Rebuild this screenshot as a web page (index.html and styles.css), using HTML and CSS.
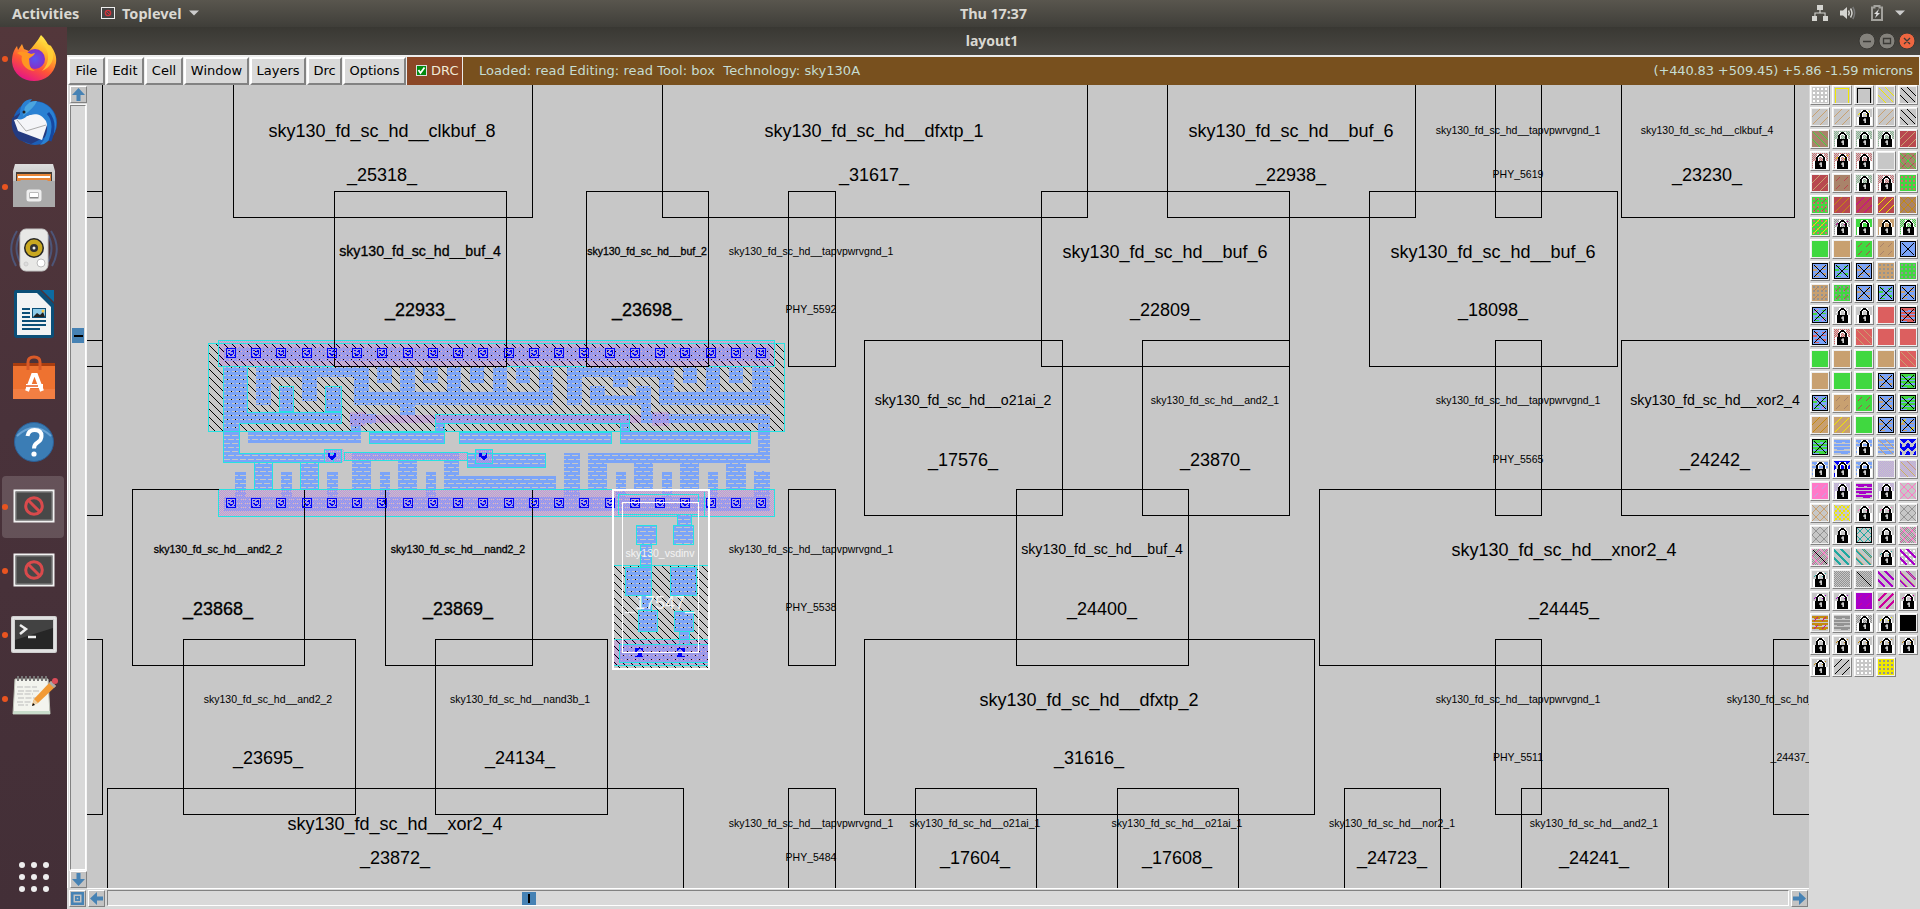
FILE: index.html
```html
<!DOCTYPE html>
<html lang="en">
<head>
<meta charset="utf-8">
<title>layout1</title>
<link rel="stylesheet" href="styles.css">
</head>
<body>
<header class="topbar">
  <div class="top-left">
    <span class="activities">Activities</span>
    <svg class="app-mini" width="14" height="12" viewBox="0 0 14 12"><rect x=".5" y=".5" width="13" height="11" fill="#444" stroke="#eee"/><circle cx="7" cy="6" r="2.6" fill="none" stroke="#d0343c" stroke-width="1.4"/><path d="M5 4l4 4" stroke="#d0343c"/></svg>
    <span class="toplevel">Toplevel</span>
    <svg width="10" height="6" viewBox="0 0 10 6"><path d="M0 .5h10L5 5.5z" fill="#ccc"/></svg>
  </div>
  <div class="clock">Thu 17:37</div>
  <div class="tray">
    <svg width="16" height="16" viewBox="0 0 16 16" fill="#d4d4d0"><path d="M5 0h6v5H8.6v2.500h5V11H16v5h-5v-5h1.500V8.600h-9V11H5v5H0v-5h2.400V7.500h5V5H5z"/></svg>
    <svg width="16" height="14" viewBox="0 0 16 14"><path d="M0 4.500h3L7 1v12L3 9.500H0z" fill="#d4d4d0"/><path d="M8.500 4.500q1.500 2.500 0 5M10.500 2.500q3 4.500 0 9" fill="none" stroke="#d4d4d0" stroke-width="1.500"/><path d="M12.800 1q3.600 6 0 12" fill="none" stroke="#777" stroke-width="1.500"/></svg>
    <svg width="12" height="16" viewBox="0 0 12 16"><path d="M1 2.500h2.500V1h5v1.500H11V15H1z" fill="none" stroke="#a3a29d" stroke-width="2"/><path d="M8 4L3 9h2.500L4 13l5-5H6.500z" fill="#ddd"/></svg>
    <svg width="10" height="6" viewBox="0 0 10 6"><path d="M0 .5h10L5 5.500z" fill="#ccc"/></svg>
  </div>
</header>
<div class="desktop">
  <nav class="dock">
    <div class="slot run"><svg viewBox="0 0 48 48"><defs><linearGradient id="fx" x1=".8" y1="0" x2=".3" y2="1"><stop offset="0" stop-color="#fff44f"/><stop offset=".35" stop-color="#ffb02a"/><stop offset=".65" stop-color="#ff5634"/><stop offset="1" stop-color="#e3128a"/></linearGradient><radialGradient id="fp"><stop offset="0" stop-color="#5a55f2"/><stop offset="1" stop-color="#8430c8"/></radialGradient></defs><path d="M31 1c4 4 6 7 7 10 2 0 3 1 3 1 4 6 6 11 5 17C44 40 35 47 24 47S3 40 2 28c0-8 2-12 5-16l1 4 4-6 2 5 5 2c4-5 8-9 12-16z" fill="url(#fx)"/><circle cx="25" cy="25" r="10" fill="url(#fp)"/><path d="M7 19c5-3 9-1 14 1l4-1c-1 3-5 4-6 6 1 4-1 8 6 12-10 0-15-9-13-15z" fill="#ff9622"/><path d="M30 8c10 7 11 20 2 29 12-5 15-18 6-27z" fill="#ffd236" opacity=".8"/></svg></div>
    <div class="slot"><svg viewBox="0 0 48 48"><circle cx="25" cy="25" r="22" fill="#1c5fb8"/><path d="M2 20q-2 14 7 22l12 4 14-7 8-15-8-9-20-3z" fill="#243b80"/><path d="M4 22l28-9 8 5-8 24-24-9z" fill="#f4f5f8"/><path d="M7 22l9 11 20-6" fill="none" stroke="#aaa"/><path d="M10 16Q10 2 22 1l-2 3c14-3 25 7 26 19 1 11-5 19-12 23l-4 1c6-6 9-17 6-24-5-8-12-8-19-5-3 3-6 4-10 3z" fill="#2a81d3"/><path d="M15 9q5-7 12-6-3 7-14 15z" fill="#4ba5df"/><path d="M38 15q9 10 2 28" fill="none" stroke="#1547a0" stroke-width="3"/><circle cx="14" cy="14" r="1.500" fill="#222"/></svg></div>
    <div class="slot run"><svg viewBox="0 0 48 48"><defs><linearGradient id="gr" x1="0" y1="0" x2="0" y2="1"><stop offset="0" stop-color="#ddd"/><stop offset="1" stop-color="#999"/></linearGradient></defs><path d="M5 2h38l2 7v36H3V9z" fill="url(#gr)"/><path d="M6 10h36v10H6z" fill="#443c36"/><path d="M7 12h34v8H7z" fill="#e98739"/><path d="M8 15h32" stroke="#fff" stroke-width="2"/><path d="M3 19h7l1-1h26l1 1h7v26H3z" fill="#aaa"/><rect x="18" y="29" width="12" height="9" rx="1" fill="#888" stroke="#eee" stroke-width="3"/><rect x="20" y="31" width="8" height="4" fill="#fff"/></svg></div>
    <div class="slot"><svg viewBox="0 0 48 48"><path d="M7 5Q-4 22 6 40M41 5q11 17 1 35M10 9Q3 22 10 36M38 9q7 13 0 27" fill="none" stroke="#4d5578" stroke-width="2"/><rect x="10" y="3" width="28" height="42" rx="6" fill="#e8e8e6"/><rect x="10" y="3" width="28" height="42" rx="6" fill="none" stroke="#c4c4c4"/><circle cx="24" cy="22" r="10" fill="#252525"/><circle cx="24" cy="22" r="8.500" fill="#c9a820"/><circle cx="24" cy="22" r="4" fill="#333"/><circle cx="24" cy="22" r="1.500" fill="#eee"/><circle cx="31" cy="37" r="4" fill="#fff" stroke="#bbb"/><circle cx="16" cy="38" r="2" fill="#ddd" stroke="#ccc"/></svg></div>
    <div class="slot"><svg viewBox="0 0 48 48"><path d="M6 0h24l14 14v31q0 3-3 3H7q-3 0-3-3V3q0-3 2-3z" fill="#0b4f78"/><path d="M7 3h20l14 14v28H7z" fill="#f1f3f4"/><path d="M32 0h12v12z" fill="#0d6ba1"/><path d="M12 19h8M12 23h8M12 27h8M12 31h24M12 35h24M12 39h18" stroke="#0b4f78" stroke-width="2"/><rect x="22.500" y="18.500" width="13" height="9" fill="#8ecbe9" stroke="#0b4f78"/><path d="M23 27l4-4 3 2 3-3 2 5z" fill="#222"/><circle cx="33" cy="21" r="1.500" fill="#f5c84b"/></svg></div>
    <div class="slot"><svg viewBox="0 0 48 48"><path d="M3 9h42v12H3z" fill="#a83d10"/><path d="M3 12h42v33H3z" fill="#ee7230"/><path d="M3 35h42v10H3z" fill="#f37f43"/><path d="M18 16V8q0-5 6-5t6 5v8" fill="none" stroke="#d95a28" stroke-width="3"/><path d="M17 37l6-16h3l6 16M16 32h17" fill="none" stroke="#fff" stroke-width="4"/><path d="M16 32h12" stroke="#e85d20" stroke-width="1.500"/></svg></div>
    <div class="slot"><svg viewBox="0 0 48 48"><circle cx="24" cy="24" r="19.500" fill="#3b7db5" stroke="#2c5f96"/><path d="M7 18Q24 2 41 18" stroke="#6ba3d3" stroke-width="2" fill="none"/><path d="M17.500 18q1-6 7-6 7 0 7 6 0 4-4 6.500-3.500 2-3.500 6" fill="none" stroke="#fff" stroke-width="4"/><circle cx="24" cy="36" r="2.600" fill="#fff"/></svg></div>
    <div class="slot run active"><svg viewBox="0 0 48 48"><rect x="4.500" y="8.500" width="39" height="31" fill="#444" stroke="#f2f2f2" stroke-width="2"/><rect x="6" y="10" width="36" height="28" fill="#484848" stroke="#888"/><circle cx="24" cy="24" r="8.300" fill="none" stroke="#d94a4c" stroke-width="3"/><path d="M18.500 18.500l11 11" stroke="#d94a4c" stroke-width="3"/></svg></div>
    <div class="slot run"><svg viewBox="0 0 48 48"><rect x="4.500" y="8.500" width="39" height="31" fill="#444" stroke="#f2f2f2" stroke-width="2"/><rect x="6" y="10" width="36" height="28" fill="#484848" stroke="#888"/><circle cx="24" cy="24" r="8.300" fill="none" stroke="#d94a4c" stroke-width="3"/><path d="M18.500 18.500l11 11" stroke="#d94a4c" stroke-width="3"/></svg></div>
    <div class="slot run"><svg viewBox="0 0 48 48"><rect x="1" y="6" width="46" height="37" rx="2" fill="#cfcfcf"/><rect x="3" y="8" width="42" height="33" fill="none" stroke="#f4f4f4"/><rect x="5" y="10" width="38" height="29" fill="#262626"/><path d="M5 10h38v8L5 30z" fill="#424242"/><path d="M10 15l6 4-6 5M18 27h8" fill="none" stroke="#eee" stroke-width="2.500"/></svg></div>
    <div class="slot run"><svg viewBox="0 0 48 48"><path d="M5 5h33l2 35H3z" fill="#f3f4ee" stroke="#b9beb3"/><path d="M4 37h36v3H3z" fill="#c9dccb"/><path d="M8 2v5M12 2v5M16 2v5M20 2v5M24 2v5M28 2v5M32 2v5M36 2v5" stroke="#777" stroke-width="2"/><path d="M7 13h20M8 17h22M7 20h16M8 24h19M7 28h14M8 31h10" stroke="#bbb" stroke-dasharray="6 1.500"/><path d="M22 31l2-6L41 7l5 5-18 17z" fill="#f19a35"/><path d="M24 25l4 4-6 3z" fill="#edcfa3"/><path d="M41 7l5 5-2 2-5-5z" fill="#aaa"/><circle cx="45" cy="7" r="3" fill="#dd4c59"/><path d="M22 32l1-3 2 2z"/></svg></div>
    <svg class="app-grid" width="32" height="32" viewBox="0 0 32 32" fill="#eee"><circle cx="4" cy="4" r="3"/><circle cx="16" cy="4" r="3"/><circle cx="28" cy="4" r="3"/><circle cx="4" cy="16" r="3"/><circle cx="16" cy="16" r="3"/><circle cx="28" cy="16" r="3"/><circle cx="4" cy="28" r="3"/><circle cx="16" cy="28" r="3"/><circle cx="28" cy="28" r="3"/></svg>
  </nav>
  <main class="window">
    <div class="titlebar"><span class="title">layout1</span>
      <svg class="win-buttons" width="58" height="18" viewBox="0 0 58 18"><g stroke="#393834"><circle cx="9" cy="9" r="8" fill="#84827c"/><circle cx="29" cy="9" r="8" fill="#84827c"/><circle cx="49" cy="9" r="8" fill="#ee6640"/></g><path d="M5 9.500h8M25.500 6.500h7v5h-7zM46 6l6 6M52 6l-6 6" fill="none" stroke="#3b3a36" stroke-width="1.300"/></svg>
    </div>
    <div class="menubar">
      <span class="mb file">File</span><span class="mb edit">Edit</span><span class="mb cell">Cell</span><span class="mb win">Window</span><span class="mb layers">Layers</span><span class="mb drcm">Drc</span><span class="mb opts">Options</span>
      <span class="drc"><svg width="11" height="11" viewBox="0 0 11 11"><rect x=".5" y=".5" width="10" height="10" fill="#008a10" stroke="#ddd"/><path d="M2.500 5l2 3 4-5.500" fill="none" stroke="#fff" stroke-width="1.800"/></svg>DRC</span>
      <span class="status"><span class="loaded">Loaded: read Editing: read Tool: box&nbsp; Technology: sky130A</span><span class="coords">(+440.83 +509.45) +5.86 -1.59 microns</span></span>
    </div>
    <div class="work">
      <div class="view">
        <div class="vscroll">
          <div class="sbtn"><svg width="13" height="13" viewBox="0 0 13 13"><path d="M6.500 0L13 7H8.500v6h-4V7H0z"/></svg></div>
          <div class="vtrough"><i class="vthumb"></i></div>
          <div class="sbtn"><svg width="13" height="13" viewBox="0 0 13 13"><path d="M6.500 13L0 6h4.500V0h4v6H13z"/></svg></div>
        </div>
        <svg class="layout" id="layout" width="1722" height="803" viewBox="87 85 1722 803"></svg>
        <div class="sbtn corner"><svg width="13" height="13" viewBox="0 0 13 13"><path d="M0 0h13v13H0zM2.500 2.500v8h8v-8zM4 4h5v5H4zM5.700 5.700v1.600h1.600V5.700z" fill-rule="evenodd"/></svg></div>
        <div class="hscroll">
          <div class="sbtn"><svg width="13" height="13" viewBox="0 0 13 13"><path d="M0 6.500L7 0v4.500h6v4H7V13z"/></svg></div>
          <div class="htrough"><i class="hthumb"></i></div>
          <div class="sbtn"><svg width="13" height="13" viewBox="0 0 13 13"><path d="M13 6.500L6 13V8.500H0v-4h6V0z"/></svg></div>
        </div>
      </div>
      <div class="palette" id="palette"></div>
    </div>
  </main>
</div>
<script src="app.js"></script>
</body>
</html>
```
FILE: styles.css
```css
* { box-sizing: border-box; }
body { margin: 0; width: 1920px; height: 909px; overflow: hidden; display: flex; flex-direction: column; background: #d9d9d9; font-family: "DejaVu Sans", sans-serif; }
svg { display: block; flex: none; }

.topbar { height: 27px; flex: none; display: grid; grid-template-columns: 1fr auto 1fr; align-items: center; background: linear-gradient(#59564e, #3f3e39); color: #dad8d2; font: 700 14.5px "Noto Sans", sans-serif; padding-bottom: 1px; }
.top-left { display: flex; align-items: center; padding-left: 12px; }
.activities { width: 89px; }
.toplevel { width: 67px; margin-left: 7px; }
.clock { width: 67px; white-space: nowrap; letter-spacing: -.15px; margin-left: 67px; }
.tray { display: flex; justify-content: flex-end; align-items: center; padding-right: 15px; gap: 12px; }
.tray svg:nth-child(2) { margin-right: 3px; }

.desktop { flex: 1; display: flex; min-height: 0; }
.dock { width: 67px; flex: none; display: flex; flex-direction: column; align-items: center; background: linear-gradient(#53373b, #49323a 45%, #432f37); }
.slot { width: 67px; height: 64px; display: flex; align-items: center; justify-content: center; position: relative; flex: none; padding-bottom: 2px; }
.slot svg { width: 48px; height: 48px; }
.slot.run::before { content: ""; position: absolute; left: 2px; top: 29px; width: 6px; height: 6px; border-radius: 50%; background: #e95420; }
.slot.active::after { content: ""; position: absolute; left: 2px; top: 1px; width: 62px; height: 62px; border-radius: 4px; background: rgba(255,255,255,.16); }
.slot.active svg { z-index: 1; }
.slot.active::before { z-index: 1; }
.app-grid { margin-top: auto; margin-bottom: 16px; }

.window { flex: 1; min-width: 0; display: flex; flex-direction: column; background: #d9d9d9; }
.titlebar { height: 28px; flex: none; display: flex; align-items: center; justify-content: center; position: relative; background: linear-gradient(#393833, #4a4843); color: #dad8d2; font: 700 14px "Noto Sans", sans-serif; padding: 0 3px 2px 0; }
.win-buttons { position: absolute; right: 4px; top: 5px; }

.menubar { height: 30px; flex: none; display: flex; padding: 1px 1px 0 1px; border-top: 1px solid #eee; font-size: 13px; gap: 1px; background: #ececec; }
.mb { background: #d9d9d9; border: 2px solid; border-color: #fff #828282 #828282 #fff; display: flex; align-items: center; justify-content: center; padding-bottom: 2px; }
.file { width: 37px; } .edit { width: 38px; } .cell { width: 38px; } .win { width: 65px; } .layers { width: 56px; } .drcm { width: 35px; } .opts { width: 63px; }
.drc { width: 55px; background: #8b4726; color: #f0ead8; display: flex; align-items: center; gap: 4px; padding: 0 0 2px 9px; }
.status { flex: 1; background: #78501e; color: #c6ddd2; display: flex; align-items: center; justify-content: space-between; padding: 0 6px 2px 16px; white-space: nowrap; }
.loaded { letter-spacing: .06px; }
.coords { letter-spacing: -.13px; }

.work { flex: 1; display: flex; min-height: 0; }
.view { width: 1742px; flex: none; display: grid; grid-template-columns: 20px 1722px; grid-template-rows: 803px 21px; }
.vscroll { display: flex; flex-direction: column; align-items: center; padding: 1px 0 0 1px; border-left: 1px solid #fff; }
.sbtn { width: 17px; height: 17px; flex: none; background: #c3c3c3; border: 1px solid; border-color: #fff #828282 #828282 #fff; display: flex; align-items: center; justify-content: center; }
.sbtn svg { fill: #4682b4; }
.corner { margin: 2px 0 0 2px; }
.vtrough { flex: 1; width: 16px; margin: 2px 0 1px; border: 1px solid; border-color: #828282 #fff #fff #828282; padding: 222px 1px 0; background: #d9d9d9; outline: 1px solid #f6f6f6; }
.vthumb { display: flex; height: 15px; background: linear-gradient(#000, #000) center / 9px 2px no-repeat #4682b4; }
.hscroll { display: flex; align-items: center; padding: 0 1px 2px; border-top: 1px solid #fff; gap: 2px; }
.htrough { flex: 1; height: 16px; border: 1px solid; border-color: #828282 #fff #fff #828282; padding: 1px 0 0 414px; }
.hthumb { display: block; height: 13px; width: 14px; background: linear-gradient(#000, #000) center / 2px 9px no-repeat #4682b4; }
.layout { background: #c7c7c7; }

.palette { flex: 1; display: grid; grid-template-columns: repeat(5, 20px); grid-auto-rows: 20px; gap: 2px; align-content: start; padding: 0 0 0 1px; }
.swatch { border: 1px solid; border-color: #fff #828282 #828282 #fff; padding: 1px; background: #eee; }

text { font-family: "Liberation Sans", Arial, sans-serif; text-anchor: middle; }
.t-l { font-size: 18px; } .t-m { font-size: 14.200px; } .t-s { font-size: 10.500px; }
.strong { stroke: #000; stroke-width: .3px; }
.light { fill: #f4f4f4; }
```
FILE: app.js
```js
const px = (cells, c) => cells.map(([x, y, w = 1, h = 1]) => `<rect x="${x}" y="${y}" width="${w}" height="${h}" fill="${c}"/>`).join('');
const diag = (n, up) => Array.from({ length: n }, (_, i) => [up ? n - 1 - i : i, i]);
const pattern = (id, n, body) => `<pattern id="${id}" width="${n}" height="${n}" patternUnits="userSpaceOnUse">${body}</pattern>`;
const stipple = c => px([[0, 0, 8, 2], [0, 2, 8], [6, 3, 2], [0, 4, 8, 2], [0, 6, 8], [2, 7, 2]], c);
const check = c => px([[1, 0], [0, 1]], c);
const wedge = px([[0, 0, 8], [1, 1, 6], [2, 2, 4], [3, 3, 2], [0, 4, 1, 3], [7, 4, 1, 3], [1, 5, 1, 3], [6, 5, 1, 3], [0, 7, 2], [5, 7, 3]], '#0202f4');

// Cell outlines: x1, y1, x2, y2
const frames = [
  [60,60,102,217],[233,60,532,217],[662,60,1087,217],[1167,60,1415,217],[1495,60,1541,217],[1621,60,1794,217],
  [60,191,102,366],[334,191,506,366],[586,191,708,366],[788,191,835,366],[1041,191,1289,366],[1369,191,1617,366],
  [60,340,102,515],[864,340,1062,515],[1142,340,1289,515],[1495,340,1541,515],[1621,340,1850,515],
  [132,489,304,665],[385,489,532,665],[788,489,835,665],[1016,489,1188,665],[1319,489,1850,665],
  [60,639,102,814],[183,639,355,814],[435,639,607,814],[864,639,1314,814],[1495,639,1541,814],[1773,639,1850,814],
  [107,788,683,950],[788,788,835,950],[915,788,1036,950],[1117,788,1238,950],[1344,788,1440,950],[1521,788,1668,950]
];

// Labels: centre x, name baseline, name, name size, id baseline, id, id size, emphasised
const P = 'sky130_fd_sc_hd__';
const labels = [
  [382,137,'clkbuf_8','l',181,'_25318_','l'],[874,137,'dfxtp_1','l',181,'_31617_','l'],[1291,137,'buf_6','l',181,'_22938_','l'],
  [1518,134,'tapvpwrvgnd_1','s',178,'PHY_5619','s'],[1707,134,'clkbuf_4','s',181,'_23230_','l'],
  [420,256,'buf_4','m',316,'_22933_','l',1],[647,255,'buf_2','s',316,'_23698_','l',1],[811,255,'tapvpwrvgnd_1','s',313,'PHY_5592','s'],
  [1165,258,'buf_6','l',316,'_22809_','l'],[1493,258,'buf_6','l',316,'_18098_','l'],
  [963,405,'o21ai_2','m',466,'_17576_','l'],[1215,404,'and2_1','s',466,'_23870_','l'],[1518,404,'tapvpwrvgnd_1','s',463,'PHY_5565','s'],[1715,405,'xor2_4','m',466,'_24242_','l'],
  [218,553,'and2_2','s',615,'_23868_','l',1],[458,553,'nand2_2','s',615,'_23869_','l',1],[811,553,'tapvpwrvgnd_1','s',611,'PHY_5538','s'],
  [1102,554,'buf_4','m',615,'_24400_','l'],[1564,556,'xnor2_4','l',615,'_24445_','l'],
  [268,703,'and2_2','s',764,'_23695_','l'],[520,703,'nand3b_1','s',764,'_24134_','l'],[1089,706,'dfxtp_2','l',764,'_31616_','l'],
  [1518,703,'tapvpwrvgnd_1','s',761,'PHY_5511','s'],[1791,703,'and2_1','s',761,'_24437_','s'],
  [395,830,'xor2_4','l',864,'_23872_','l'],[811,827,'tapvpwrvgnd_1','s',861,'PHY_5484','s'],[975,827,'o21ai_1','s',864,'_17604_','l'],
  [1177,827,'o21ai_1','s',864,'_17608_','l'],[1392,827,'nor2_1','s',864,'_24723_','l'],[1594,827,'and2_1','s',864,'_24241_','l']
];

const box = ([x1, y1, x2, y2], attr) => `<rect x="${x1}" y="${y1}" width="${x2 - x1}" height="${y2 - y1}" ${attr}/>`;
const fillAll = (list, id) => list.map(r => box(r, `fill="url(#${id})"`)).join('');
const lineAll = (list, c, w = 1) => list.map(r => box(r.map(v => Math.floor(v) + .5), `fill="none" stroke="${c}" stroke-width="${w}"`)).join('');

const localPlain = [
  [256,377,271,405],[256,367,369,377],[302,377,317,401],[354,377,369,392],[354,392,553,405],
  [377,367,392,383],[400,367,415,392],[400,405,415,415],[423,367,438,383],[447,367,461,392],[470,367,484,383],[493,367,507,392],[516,367,530,383],[539,367,553,392],
  [567,367,674,377],[567,377,582,405],[613,377,628,387],[590,386,605,395],[590,395,651,405],[636,386,651,395],[641,405,651,414],[659,377,674,392],[659,392,770,405],
  [683,367,697,383],[706,367,720,392],[729,367,743,383],[752,367,770,392],[669,414,770,423],[758,423,770,453],[588,453,770,463],
  [350,414,376,424],[351,424,361,432],[641,414,669,423],[248,432,361,443],
  [235,472,246,497],[281,472,292,497],[327,472,338,497],[352,461,371,489],[380,472,390,497],[398,461,417,489],[426,472,436,497],[444,461,459,489],[459,476,556,489],
  [564,453,580,497],[588,463,607,489],[616,472,626,497],[634,463,653,489],[662,472,672,497],[680,463,699,489],[708,472,718,497],[726,463,746,489],[754,471,770,497],
  [352,453,459,460],[224,347,770,361],[224,497,770,511]
];
const localLined = [
  [279,386,293,411],[325,386,341,411],[254,462,272,489],[300,462,318,489],[435,414,629,423],[435,423,444,431],[620,423,629,431],
  [369,432,444,443],[459,432,611,443],[620,431,750,443],[467,453,545,467],[324,449,341,462],[475,449,492,463]
];
const inverterLocal = [
  [636,525,656,544],[673,525,693,544],[677,514,691,525],[640,544,651,567],[625,567,651,595],[670,567,696,595],
  [641,595,651,610],[638,610,657,631],[674,611,693,631],[679,631,689,644]
];
const leftTrunk = 'M223.500 366.500H247.500V412.500H341.500V423.500H239.500V453.500H333.500V462.500H223.500Z';
const metal = [[218,340,775,366],[218,490,775,516],[350,412,366,426],[366,415,435,423],[435,414,629,423],[629,415,641,423],[652,412,669,426],[324,449,344,462],[344,453,467,460],[475,449,492,463]];
const viaXs = Array.from({ length: 22 }, (_, i) => Math.round(226 + i * 25.240));
const viaDots = px([[2, 2, 2], [6, 2, 2], [5, 3, 3], [7, 4, 1, 2], [2, 5, 2], [3, 6, 4], [4, 7, 2], [1, 8], [8, 7]], '#0202f4');
const via = (x, y) => `<g transform="translate(${x} ${y})"><rect x=".5" y=".5" width="9" height="9" fill="none" stroke="#0202f4"/>${viaDots}</g>`;

document.getElementById('layout').innerHTML = `<defs>
  ${pattern('nwell', 8, px(diag(8), '#000'))}${pattern('local', 8, stipple('#7ba4f8'))}
  ${pattern('metal', 2, check('#c090dc'))}${pattern('via', 8, wedge)}
  </defs><g shape-rendering="crispEdges">
  ${fillAll([[209,344,784,431]], 'nwell')}
  ${fillAll(localPlain.concat(localLined), 'local')}<path d="${leftTrunk}" fill="url(#local)"/>
  ${fillAll(metal, 'metal')}
  ${lineAll([[208,343,784,431],[218,340,774,366],[218,489,774,516],[344,452,467,460]].concat(localLined), '#26e2e2')}
  <path d="${leftTrunk}" fill="none" stroke="#26e2e2"/>
  ${lineAll(frames, '#000')}
  <path d="M218.500 489.500H774.500" stroke="#26e2e2"/>
  ${viaXs.map(x => via(x, 348) + via(x, 498)).join('')}
  ${box([328,453,336,460], 'fill="url(#via)"')}${box([479,453,487,460], 'fill="url(#via)"')}
  ${box([614,517,708,565], 'fill="#c7c7c7"')}${box([614,566,708,668], 'fill="#c7c7c7"')}${box([614,566,708,668], 'fill="url(#nwell)"')}
  ${fillAll(inverterLocal, 'local')}${lineAll(inverterLocal, '#26e2e2')}
  ${fillAll([[619,645,708,663]], 'local')}${fillAll([[614,640,708,666]], 'metal')}
  ${lineAll([[613,639,708,665],[619,644,708,662],[618,494,698,514]], '#26e2e2')}
  <path d="M613 565.500H708M704.500 492V516" stroke="#26e2e2"/>
  ${box([635,648,643,657], 'fill="url(#via)"')}${box([677,648,685,657], 'fill="url(#via)"')}
  ${lineAll([[622,502,698,652]], '#fff')}
  <rect x="613" y="490" width="96" height="179" fill="none" stroke="#fff" stroke-width="2"/>
  </g>
  ${labels.map(([x, y, n, s, y2, id, s2, b]) => `<text class="t-${s}${b ? ' strong' : ''}" x="${x}" y="${y}">${P}${n}</text><text class="t-${s2}${b ? ' strong' : ''}" x="${x}" y="${y2}">${id}</text>`).join('')}
  <text class="t-s light" x="660" y="557">sky130_vsdinv</text><text class="t-l light" x="660" y="609">_17547_</text>`;

// Layer palette. Each entry lists its stacked styles, "+"-separated; L adds the lock.
const color = { g: '#40d840', t: '#c8a070', r: '#b8484f', b: '#a9836a', s: '#dc5f5f', u: '#7ba4f8', k: '#000', y: '#f0e800', w: '#fff', m: '#cc009c', o: '#c48a10', p: '#a800c8', i: '#ff78c8', c: '#20a8a0', e: '#939393', v: '#bfa5e2', h: '#86b890', q: '#cf6c70' };
const layers = `.w fy fk \\y \\k|/t /t Ly /t \\k|=b+\\g L#h L#h L#h =r+/t|L#q L#q+-y L#q _ =b+xg+-r|=r+/t =b+-r L#h L#q =g+.q
=g+.q+-r =r+/o =r+/m =r+/y =b+xo|=g+.q+/y L#e+-m L=g L=t L#g|=g =t =g+-r =t+-b X|X+zt X+zg X+zt =t+.e =g+.e
=t+.e+-b =g+.e+-r X+zt X+zg X+zt|X+zg+-i Lw L_ =s X+~s|X+zt+zs L#s =s+\\t =s =s|=g =t =g =t =s+\\t|=t =g =g X+zt X+~g
X+zg+-i =t+-b =g+-r X+zt X+~g|=t+/o =t+/y =g X+zt X+zt+-y|X+~g ~u L~u ~u+\\t V|L~u LV L~u #v #v+\\t
=i+-v L#v ~p L#v xi|xi+xt .y+xy Li Li xe|xt+xe L_ xc+K L_ #e+xi|#e+xi+Dk Tc Tc+\\t Lc .w+Tp
Lc #e #e+Dk Tp Tp+\\t|Lp Lp =p+-m Um Lm|~o+-m ~e L#e Ly =k|L_ Lo Lo Lo Lo|Lo /k .w+.w =y+.e`.split(/[|\n]/).map(r => r.split(' '));

const styles = {
  '=': c => `<rect width="16" height="16" fill="${c}"/>`,
  '.': c => px([1, 5, 9, 13].flatMap(y => [1, 5, 9, 13].map(x => [x, y, 2, 2])), c),
  'f': c => `<path d="M1.500 16V1.500H14.500V16" fill="none" stroke="${c}"/>`,
  '\\': c => `<path d="M1 1l14 14M7 0l9 9M0 8l8 8" stroke="${c}"/>`,
  'T': c => `<path d="M0 1l15 15M7 0l9 9M0 9l7 7" stroke="${c}" stroke-width="1.800"/>`,
  '/': c => `<path d="M1 15L15 1M0 8l8-8M8 16l8-8" stroke="${c}"/>`,
  'U': c => `<path d="M1 15L15 1M0 8l8-8M8 16l8-8" stroke="${c}" stroke-width="1.800"/>`,
  '#': c => px(Array.from({ length: 128 }, (_, i) => [(i % 8) * 2 + (i >> 3) % 2, i >> 3]), c),
  '-': c => `<path d="M2 6l4-4M10 6l4-4M2 14l4-4M10 14l4-4" stroke="${c}" stroke-width="1.200"/>`,
  'x': c => `<path d="M0 8l8-8 8 8-8 8zM0 0l16 16M16 0L0 16" fill="none" stroke="${c}"/>`,
  'D': c => `<path d="M1 1l14 14" stroke="${c}" stroke-width="1.300"/>`,
  '~': c => px([[0, 1, 16, 2], [2, 3, 6], [11, 3, 5], [0, 5, 16, 2], [0, 8, 16, 2], [3, 10, 7], [0, 12, 16, 2], [7, 14, 7]], c),
  'z': c => px([[2, 3, 4], [10, 3, 4], [1, 6, 4, 2], [9, 6, 5], [3, 10, 5], [11, 10, 3, 2], [2, 13, 5]], c),
  'X': () => styles['=']('#7ba4f8'),
  'K': () => '<rect x=".5" y=".5" width="15" height="15" fill="none" stroke="#000"/>',
  'V': () => `<g>${wedge}</g><g transform="translate(8)">${wedge}</g><g transform="translate(0 8)">${wedge}</g><g transform="translate(8 8)">${wedge}</g>`,
  '_': () => ''
};
const contact = '<rect x=".5" y=".5" width="15" height="15" fill="none" stroke="#000" stroke-width="1.200"/><path d="M2 2l12 12M14 2L2 14" stroke="#000"/>';
const lock = '<path d="M5 9V4.500L7 2H10L12 4.500V9M2 8V16M15 8V16" fill="none" stroke="#fff" stroke-width="3"/><path d="M5 8V4.500L7 2H10L12 4.500V8" fill="none" stroke="#000" stroke-width="1.300"/><rect x="3" y="8" width="11" height="8"/><path d="M7.500 9.500h2v4h-1v-2h-1z" fill="#ccc" stroke="#ccc" stroke-width=".6"/>';

document.getElementById('palette').innerHTML = layers.flat().map(code => {
  const locked = code[0] === 'L';
  let body = locked ? code.slice(1) : code;
  if (body.length === 1 && color[body]) body = '-' + body;
  const art = body.split('+').map(p => styles[p[0]](color[p[1]])).join('');
  return `<div class="swatch"><svg width="16" height="16" viewBox="0 0 16 16" shape-rendering="crispEdges"><rect width="16" height="16" fill="#c7c7c7"/>${art}${body[0] === 'X' ? contact : ''}${locked ? lock : ''}</svg></div>`;
}).join('');
```
